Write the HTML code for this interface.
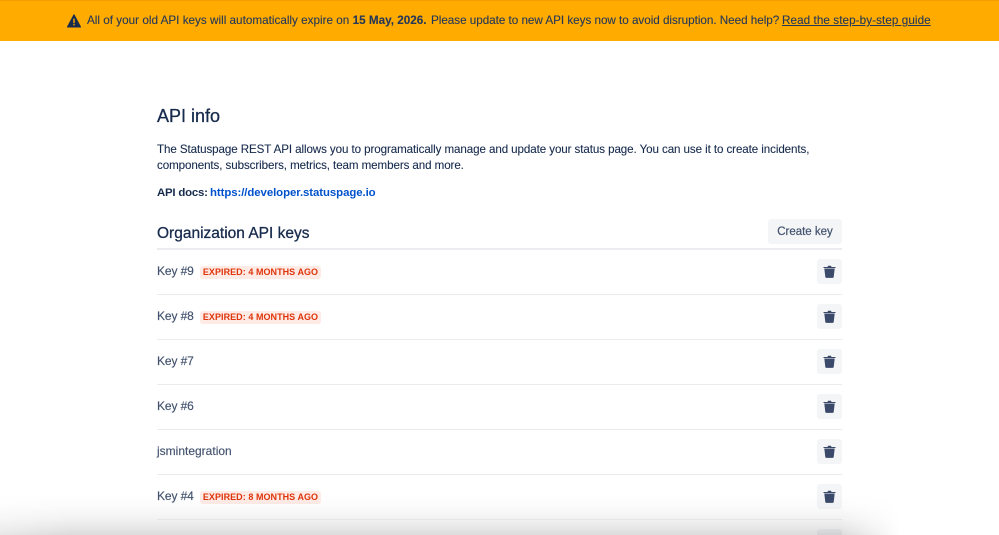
<!DOCTYPE html>
<html><head><meta charset="utf-8"><style>
html,body{margin:0;padding:0;width:999px;height:535px;overflow:hidden;background:#fff}
body{font-family:"Liberation Sans",sans-serif;color:#172b4d;position:relative}
.t{position:absolute;white-space:nowrap;line-height:16px}
.bt{font-size:11.7px;color:#253858;-webkit-text-stroke:.1px #253858;top:13px}
.banner{position:absolute;left:0;top:0;width:999px;height:41px;background:#ffab00;border-top:1px solid #f29f05;box-sizing:border-box}
.line{position:absolute;left:157px;width:685px;height:1px;background:#ebecf0}
.key{position:absolute;left:157px;font-size:12px;line-height:16px;color:#42526e;letter-spacing:-.1px;white-space:nowrap;-webkit-text-stroke:.15px #42526e}
.badge{position:absolute;left:200px;width:121px;height:13px;line-height:13px;background:#ffebe6;border-radius:3px;color:#de350b;font-size:9px;font-weight:bold;letter-spacing:.05px;text-align:center;white-space:nowrap}
.tb{position:absolute;left:817px;width:25px;height:25px;background:#f4f5f7;border-radius:3px}
.tb svg{position:absolute;left:6px;top:6px}
.btn{position:absolute;left:768px;top:219px;width:74px;height:25px;line-height:26px;background:#f4f5f7;border-radius:3px;text-align:center;color:#42526e;font-size:11.5px;-webkit-text-stroke:.2px #42526e}
.sh{position:absolute;left:0;top:495px;width:900px;height:40px;background:linear-gradient(to bottom,rgba(0,0,0,0) 0,rgba(0,0,0,.015) 30%,rgba(0,0,0,.05) 60%,rgba(0,0,0,.1) 85%,rgba(0,0,0,.14) 100%);-webkit-mask-image:linear-gradient(to right,rgba(0,0,0,.65) 0,#000 70px,#000 840px,transparent 900px);mask-image:linear-gradient(to right,rgba(0,0,0,.65) 0,#000 70px,#000 840px,transparent 900px)}
a{color:inherit}
</style></head><body>
<div class="banner"></div>
<svg style="position:absolute;left:67px;top:14px" width="14" height="14" viewBox="0 0 14 14"><path d="M7 .8 13.600 13H.4Z" fill="#172b4d" stroke="#172b4d" stroke-linejoin="round"/><rect x="6.300" y="4.600" width="1.400" height="4.600" fill="#ffab00"/><rect x="6.300" y="10" width="1.400" height="1.400" fill="#ffab00"/></svg>
<div class="t bt" style="left:87px;letter-spacing:.01px">All of your old API keys will automatically expire on <b>15 May, 2026.</b></div>
<div class="t bt" style="left:431px;letter-spacing:-.03px">Please update to new API keys now to avoid disruption. Need help?</div>
<div class="t bt" style="left:782px;letter-spacing:.07px"><a href="#">Read the step-by-step guide</a></div>

<div class="t" style="left:157px;top:105px;font-size:18px;line-height:22px;-webkit-text-stroke:.3px #172b4d">API info</div>
<div class="t" style="left:157px;top:142px;font-size:11.6px;letter-spacing:-.09px;-webkit-text-stroke:.1px #172b4d">The Statuspage REST API allows you to programatically manage and update your status page. You can use it to create incidents,</div>
<div class="t" style="left:157px;top:158px;font-size:11.6px;letter-spacing:-.09px;-webkit-text-stroke:.1px #172b4d">components, subscribers, metrics, team members and more.</div>
<div class="t" style="left:157px;top:185px;font-size:11.4px;font-weight:bold;letter-spacing:-.2px">API docs:</div>
<div class="t" style="left:210px;top:185px;font-size:11.4px;font-weight:bold;letter-spacing:-.07px;color:#0052cc">https://developer.statuspage.io</div>

<div class="t" style="left:157px;top:224px;font-size:15.5px;line-height:20px;-webkit-text-stroke:.3px #172b4d">Organization API keys</div>
<div class="btn">Create key</div>
<div class="line" style="top:248px;height:1.500px"></div>

<div class="key" style="top:263px">Key #9</div><div class="badge" style="top:266px">EXPIRED: 4 MONTHS AGO</div>
<div class="tb" style="top:259px"><svg width="13" height="13" viewBox="0 0 13 13"><path d="M.5 2h12v1H.5Z M4.500 2 5 .7h3L8.500 2Z" fill="#3b4a6b"/><path d="M1.300 3.500h10.400l-1 8.500a1 1 0 0 1-1 .9h-6.400a1 1 0 0 1-1-.9Z" fill="#3b4a6b"/></svg></div>
<div class="line" style="top:294px"></div>

<div class="key" style="top:308px">Key #8</div><div class="badge" style="top:311px">EXPIRED: 4 MONTHS AGO</div>
<div class="tb" style="top:304px"><svg width="13" height="13" viewBox="0 0 13 13"><path d="M.5 2h12v1H.5Z M4.500 2 5 .7h3L8.500 2Z" fill="#3b4a6b"/><path d="M1.300 3.500h10.400l-1 8.500a1 1 0 0 1-1 .9h-6.400a1 1 0 0 1-1-.9Z" fill="#3b4a6b"/></svg></div>
<div class="line" style="top:339px"></div>

<div class="key" style="top:353px">Key #7</div>
<div class="tb" style="top:349px"><svg width="13" height="13" viewBox="0 0 13 13"><path d="M.5 2h12v1H.5Z M4.500 2 5 .7h3L8.500 2Z" fill="#3b4a6b"/><path d="M1.300 3.500h10.400l-1 8.500a1 1 0 0 1-1 .9h-6.400a1 1 0 0 1-1-.9Z" fill="#3b4a6b"/></svg></div>
<div class="line" style="top:384px"></div>

<div class="key" style="top:398px">Key #6</div>
<div class="tb" style="top:394px"><svg width="13" height="13" viewBox="0 0 13 13"><path d="M.5 2h12v1H.5Z M4.500 2 5 .7h3L8.500 2Z" fill="#3b4a6b"/><path d="M1.300 3.500h10.400l-1 8.500a1 1 0 0 1-1 .9h-6.400a1 1 0 0 1-1-.9Z" fill="#3b4a6b"/></svg></div>
<div class="line" style="top:429px"></div>

<div class="key" style="top:443px;letter-spacing:0">jsmintegration</div>
<div class="tb" style="top:439px"><svg width="13" height="13" viewBox="0 0 13 13"><path d="M.5 2h12v1H.5Z M4.500 2 5 .7h3L8.500 2Z" fill="#3b4a6b"/><path d="M1.300 3.500h10.400l-1 8.500a1 1 0 0 1-1 .9h-6.400a1 1 0 0 1-1-.9Z" fill="#3b4a6b"/></svg></div>
<div class="line" style="top:474px"></div>

<div class="key" style="top:488px">Key #4</div><div class="badge" style="top:491px">EXPIRED: 8 MONTHS AGO</div>
<div class="tb" style="top:484px"><svg width="13" height="13" viewBox="0 0 13 13"><path d="M.5 2h12v1H.5Z M4.500 2 5 .7h3L8.500 2Z" fill="#3b4a6b"/><path d="M1.300 3.500h10.400l-1 8.500a1 1 0 0 1-1 .9h-6.400a1 1 0 0 1-1-.9Z" fill="#3b4a6b"/></svg></div>
<div class="line" style="top:519px;background:#f0f1f4"></div>
<div class="tb" style="top:529px;height:6px;border-radius:3px 3px 0 0"></div>

<div class="sh"></div>
</body></html>
